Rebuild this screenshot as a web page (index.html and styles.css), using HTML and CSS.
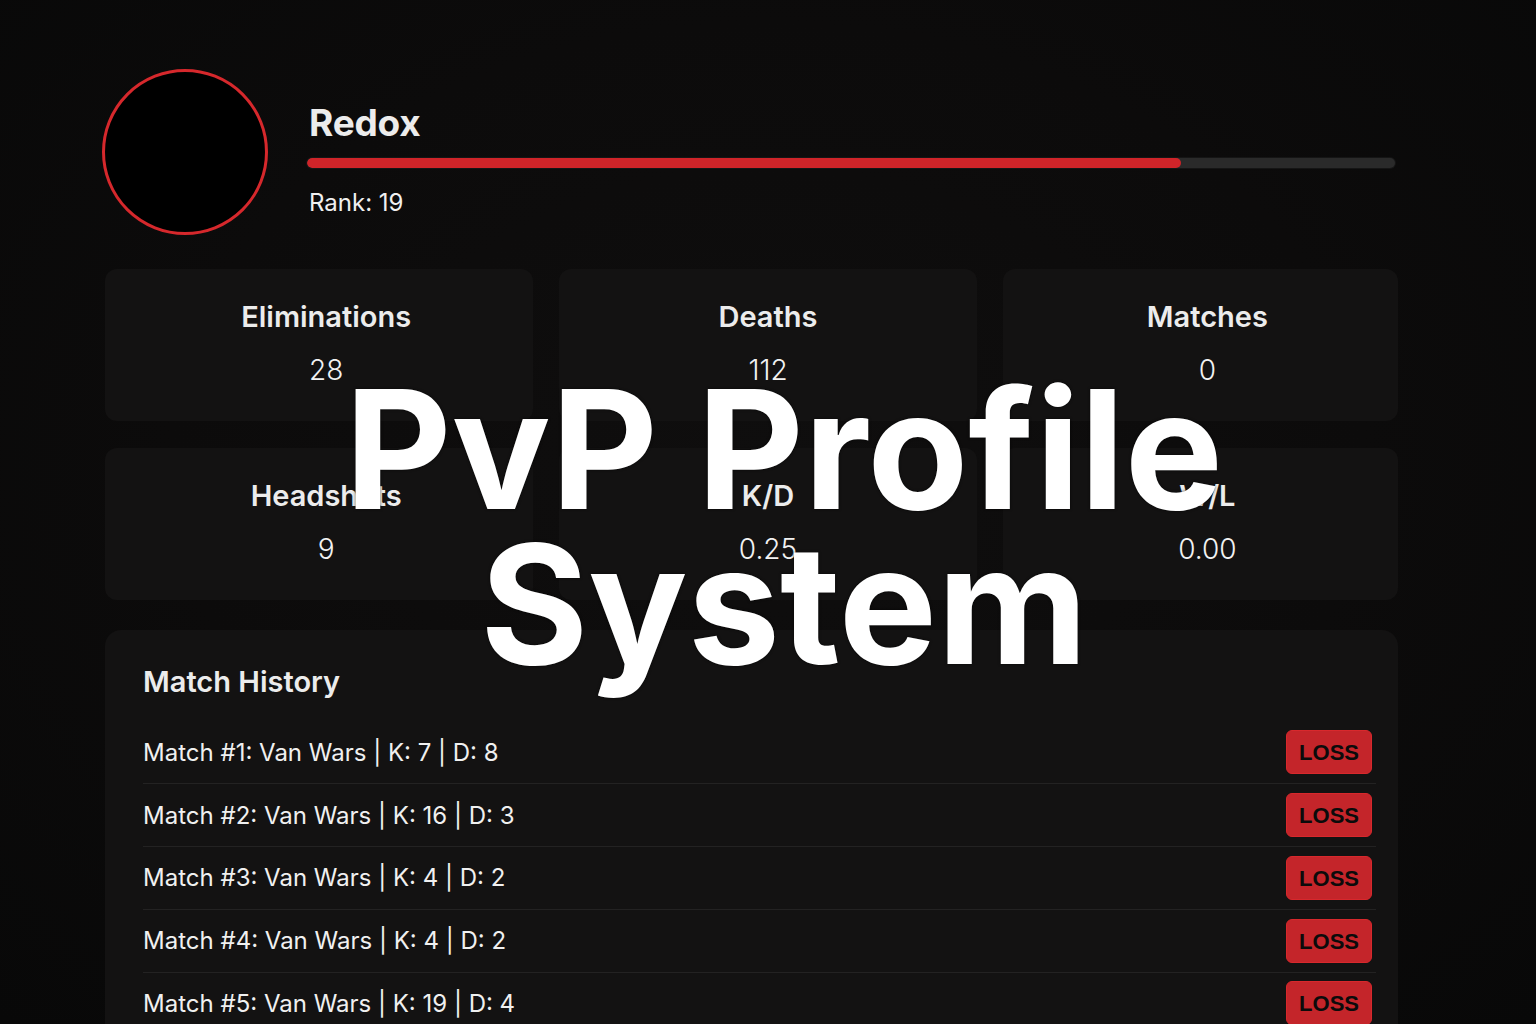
FILE: index.html
```html
<!DOCTYPE html>
<html lang="en">
<head>
<meta charset="utf-8">
<title>PvP Profile System</title>
<link rel="stylesheet" href="styles.css">
</head>
<body>
<main class="page">
  <header class="profile">
    <div class="avatar"></div>
    <div class="profile-info">
      <h1 class="name">Redox</h1>
      <div class="progress"><div class="progress-fill" style="width: 80.3%"></div></div>
      <div class="rank">Rank: 19</div>
    </div>
  </header>

  <section class="stats">
    <div class="stat-card stat-card--edge"><div class="stat-label">Eliminations</div><div class="stat-value">28</div></div>
    <div class="stat-card"><div class="stat-label">Deaths</div><div class="stat-value">112</div></div>
    <div class="stat-card stat-card--edge"><div class="stat-label">Matches</div><div class="stat-value">0</div></div>
    <div class="stat-card stat-card--edge"><div class="stat-label">Headshots</div><div class="stat-value">9</div></div>
    <div class="stat-card"><div class="stat-label">K/D</div><div class="stat-value">0.25</div></div>
    <div class="stat-card stat-card--edge"><div class="stat-label">W/L</div><div class="stat-value">0.00</div></div>
  </section>

  <section class="history">
    <h2 class="history-title">Match History</h2>
    <ul class="match-list">
      <li class="match-row"><span class="match-text">Match #1: Van Wars | K: 7 | D: 8</span><span class="badge">LOSS</span></li>
      <li class="match-row"><span class="match-text">Match #2: Van Wars | K: 16 | D: 3</span><span class="badge">LOSS</span></li>
      <li class="match-row"><span class="match-text">Match #3: Van Wars | K: 4 | D: 2</span><span class="badge">LOSS</span></li>
      <li class="match-row"><span class="match-text">Match #4: Van Wars | K: 4 | D: 2</span><span class="badge">LOSS</span></li>
      <li class="match-row"><span class="match-text">Match #5: Van Wars | K: 19 | D: 4</span><span class="badge">LOSS</span></li>
    </ul>
  </section>
</main>
<div class="title-overlay">PvP Profile<br>System</div>
</body>
</html>
```
FILE: styles.css
```css
* { box-sizing: border-box; }

html, body {
  margin: 0;
  padding: 0;
}

body {
  width: 1536px;
  height: 1024px;
  overflow: hidden;
  position: relative;
  background: radial-gradient(ellipse at 50% 45%, #0f0e0e 0%, #0c0b0b 55%, #080808 100%);
  color: #ededed;
  font-family: Inter, "Noto Sans", sans-serif;
}

.page {
  width: 1293px;
  margin-left: 105px;
  padding-top: 69px;
}

/* header */
.profile {
  display: flex;
  align-items: flex-start;
  margin-left: -3px;
}

.avatar {
  width: 166px;
  height: 166px;
  flex: none;
  border-radius: 50%;
  background: #000;
  border: 3.5px solid #d6282c;
}

.profile-info {
  flex: 1;
  margin-left: 39px;
  padding-top: 32px;
}

.name {
  margin: 0 0 0 2px;
  font-size: 37px;
  line-height: 44px;
  font-weight: 700;
  color: #ececec;
  letter-spacing: -0.2px;
}

.progress {
  margin-top: 13px;
  height: 10px;
  width: 1088px;
  border-radius: 5px;
  background: #2a2a2a;
  box-shadow: 0 0 0 1px #151515;
  overflow: hidden;
}

.progress-fill {
  height: 100%;
  background: #cf2429;
  border-radius: 5px;
}

.rank {
  margin: 20px 0 0 2px;
  font-size: 24px;
  line-height: 30px;
  color: #f0f0f0;
}

/* stats */
.stats {
  margin-top: 34px;
  display: grid;
  grid-template-columns: 428fr 417fr 395fr;
  column-gap: 26px;
  row-gap: 27px;
}

.stat-card {
  height: 152px;
  background: #131212;
  border-radius: 12px;
  text-align: center;
  padding-top: 31px;
}

.stat-card--edge {
  padding-left: 14px;
}

.stat-label {
  font-size: 29px;
  line-height: 34px;
  font-weight: 600;
  color: #ececec;
}

.stat-value {
  margin-top: 20px;
  font-size: 28px;
  line-height: 32px;
  font-weight: 300;
  color: #f2f2f2;
}

/* history */
.history {
  margin-top: 30px;
  background: #131212;
  border-radius: 16px;
  padding: 35px 22px 0 38px;
  height: 420px;
}

.history-title {
  margin: 0;
  font-size: 29px;
  line-height: 34px;
  font-weight: 600;
  color: #ececec;
}

.match-list {
  list-style: none;
  margin: 22.5px 0 0 0;
  padding: 0;
}

.match-row {
  display: flex;
  align-items: center;
  justify-content: space-between;
  height: 62.75px;
  padding-right: 4px;
  border-bottom: 1px solid #232222;
}

.match-text {
  font-size: 24px;
  color: #f0f0f0;
}

.badge {
  font-family: "Liberation Sans", Arial, sans-serif;
  font-weight: 700;
  font-size: 22px;
  line-height: 44px;
  height: 44px;
  padding: 0 12px;
  border-radius: 6px;
  background: #c4252a;
  color: #0b0b0b;
  border: 1px solid #d8282c;
}

/* overlay title */
.title-overlay {
  position: absolute;
  top: 372px;
  left: 32px;
  right: 0;
  text-align: center;
  font-family: Inter, "Noto Sans", sans-serif;
  font-weight: 700;
  font-size: 165px;
  line-height: 155px;
  letter-spacing: 0;
  color: #ffffff;
  text-shadow: 0 0 3px rgba(0, 0, 0, 0.7);
}
```
